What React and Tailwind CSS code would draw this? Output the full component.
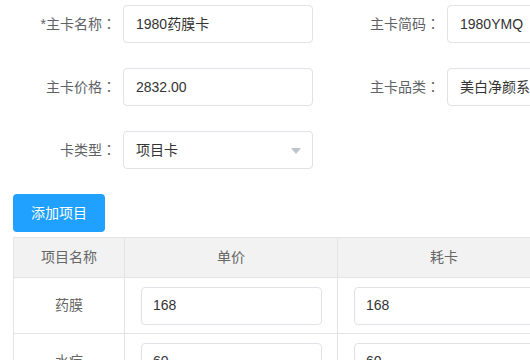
import { useState } from 'react'

const font = { fontFamily: '"Liberation Sans", "Noto Sans CJK SC", sans-serif' }

function Field({ label, value, labelW, select }) {
  return (
    <div className="flex items-center">
      <label className={`${labelW} shrink-0 pr-[7px] text-right text-[14px] text-[#606266]`}>
        {label}
        <span className="font-['Noto_Sans_CJK_TC',sans-serif]">：</span>
      </label>
      <div className="relative w-[190px] h-[38px] shrink-0 rounded-[4px] border border-[#dfe2e6] bg-white flex items-center px-[12px] text-[14px] text-[#333] overflow-hidden whitespace-nowrap">
        {value}
        {select && (
          <span className="absolute right-[11px] top-[16px] w-0 h-0 border-l-[5px] border-r-[5px] border-t-[6px] border-l-transparent border-r-transparent border-t-[#c0c4cc]" />
        )}
      </div>
    </div>
  )
}

const rows = [
  { name: '药膜', price: '168', cost: '168' },
  { name: '水疗', price: '60', cost: '60' },
]

export default function App() {
  const [items] = useState(rows)
  return (
    <div className="w-[530px] h-[360px] overflow-hidden bg-white" style={font}>
      <div className="pt-[5px] w-[640px]">
        <div className="flex flex-col gap-[25px]">
          <div className="flex gap-[24px]">
            <Field label="*主卡名称" value="1980药膜卡" labelW="w-[123px]" />
            <Field label="主卡简码" value="1980YMQ" labelW="w-[110px]" />
          </div>
          <div className="flex gap-[24px]">
            <Field label="主卡价格" value="2832.00" labelW="w-[123px]" />
            <Field label="主卡品类" value="美白净颜系列" labelW="w-[110px]" />
          </div>
          <div className="flex">
            <Field label="卡类型" value="项目卡" labelW="w-[123px]" select />
          </div>
        </div>

        <div className="pl-[13px] mt-[25px]">
          <button className="w-[92px] h-[38px] rounded-[4px] bg-[#20a0ff] text-white text-[14px]">添加项目</button>

          <table className="mt-[5px] border-collapse text-[14px] text-[#666]">
            <thead>
              <tr className="bg-[#f2f2f2] h-[40px]">
                <th className="w-[111px] border border-[#e4e4e4] font-normal">项目名称</th>
                <th className="w-[213px] border border-[#e4e4e4] font-normal">单价</th>
                <th className="w-[213px] border border-[#e4e4e4] font-normal">耗卡</th>
              </tr>
            </thead>
            <tbody>
              {items.map(r => (
                <tr key={r.name} className="h-[56px]">
                  <td className="border border-[#e4e4e4] text-center">{r.name}</td>
                  <td className="border border-[#e4e4e4] pl-[16px] pr-[15px]">
                    <div className="h-[38px] rounded-[4px] border border-[#dfe2e6] flex items-center px-[11px] text-[#333]">{r.price}</div>
                  </td>
                  <td className="border border-[#e4e4e4] pl-[16px] pr-[15px]">
                    <div className="h-[38px] rounded-[4px] border border-[#dfe2e6] flex items-center px-[11px] text-[#333]">{r.cost}</div>
                  </td>
                </tr>
              ))}
            </tbody>
          </table>
        </div>
      </div>
    </div>
  )
}
